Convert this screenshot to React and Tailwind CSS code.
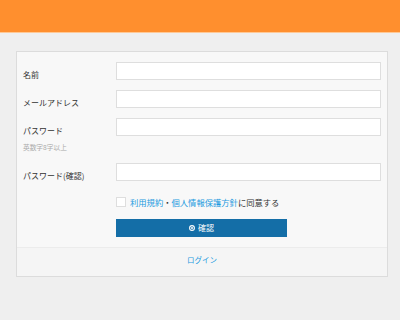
import React from "react";

const font = { fontFamily: '"Noto Sans CJK JP", "Noto Sans", sans-serif' };

function Row({ label, children, className = "" }) {
  return (
    <div className={"flex items-start " + className}>
      <div className="w-[93px] shrink-0">
        <div className="pt-[9px] text-[8px] leading-[8px] text-[#333]">{label}</div>
        {children}
      </div>
      <div className="h-[18px] flex-1 border border-[#dedede] bg-white" />
    </div>
  );
}

export default function App() {
  return (
    <div className="min-h-screen w-[400px] bg-[#efefef]" style={font}>
      <div className="h-[33px] border-b border-[#ffc996] bg-[#ff8f2e]" />
      <div className="pt-[18px]">
        <div className="ml-4 w-[372px] border border-[#dcdcdc] bg-[#f8f8f8]">
          <div className="px-[6px] pt-[10px] pb-[10px]">
            <Row label="名前" />
            <Row label="メールアドレス" className="mt-[10px]" />
            <Row label="パスワード" className="mt-[10px] h-[35px]">
              <div className="mt-[9px] text-[6.7px] leading-[7px] text-[#aaa]">英数字8字以上</div>
            </Row>
            <Row label="パスワード(確認)" className="mt-[10px]" />
            <div className="mt-[16px] ml-[93px] flex h-[10px] items-center gap-[4px]">
              <div className="h-[10px] w-[10px] border border-[#dedede] bg-white" />
              <div className="text-[8.3px] leading-[10px] text-[#333] whitespace-nowrap">
                <span className="text-[#1d9be0]">利用規約</span>・<span className="text-[#1d9be0]">個人情報保護方針</span>に同意する
              </div>
            </div>
            <div className="mt-[12px] ml-[93px] flex h-[18px] w-[171px] items-center justify-center gap-[3px] bg-[#146ea7] text-white">
              <svg width="6" height="6" viewBox="0 0 6 6">
                <circle cx="3" cy="3" r="2.4" fill="none" stroke="white" strokeWidth="1.1" />
                <circle cx="3" cy="3" r="1" fill="white" />
              </svg>
              <span className="text-[8px] leading-[8px]">確認</span>
            </div>
          </div>
          <div className="flex h-[29px] items-center justify-center border-t border-[#ececec] bg-[#f5f5f5] pb-[4px]">
            <span className="text-[7.5px] leading-[8px] text-[#1d9be0]">ログイン</span>
          </div>
        </div>
      </div>
    </div>
  );
}
